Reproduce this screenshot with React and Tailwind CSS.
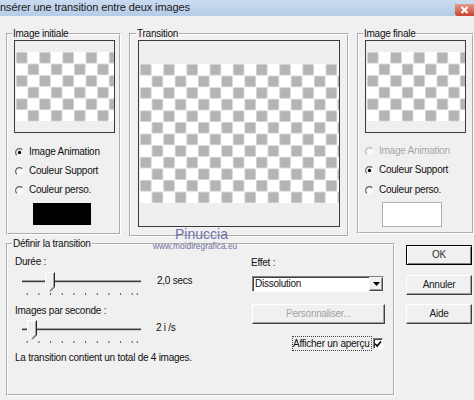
import React, { useId } from 'react';

function Checker({ w, h, cell = 11.6 }) {
  const id = 'p' + useId().replace(/[^a-zA-Z0-9]/g, '');
  return (
    <svg width={w} height={h} className="block ml-[1px]">
      <defs>
        <pattern id={id} width={cell * 2} height={cell * 2} patternUnits="userSpaceOnUse">
          <rect width={cell * 2} height={cell * 2} fill="#ffffff" />
          <rect x="0.4" y="0.4" width={cell - 0.8} height={cell - 0.8} fill="#b4b4b4" />
          <rect x={cell + 0.4} y={cell + 0.4} width={cell - 0.8} height={cell - 0.8} fill="#b4b4b4" />
        </pattern>
      </defs>
      <rect width={w} height={h} fill={`url(#${id})`} />
    </svg>
  );
}

function Radio({ checked, disabled }) {
  return (
    <svg width="9" height="9" viewBox="0 0 9 9" className="block shrink-0">
      <circle cx="4.5" cy="4.5" r="3.8" fill="#f9f9f9" />
      <path d="M7.2 1.8 A3.8 3.8 0 0 0 1.8 7.2" stroke={disabled ? '#b8b8b8' : '#666666'} strokeWidth="1.3" fill="none" />
      {checked && <circle cx="4.5" cy="4.5" r="1.7" fill="#000" />}
    </svg>
  );
}

function Slider({ thumb }) {
  const ticks = [0, 1, 2, 3, 4, 5, 6, 7, 8, 9].map((i) => 6.7 + i * 11.67).concat([116.7]);
  const t = thumb;
  return (
    <svg width="125" height="24" className="block ml-[5px] shrink-0">
      <rect x="2" y="9" width="119" height="1" fill="#a0a0a0" />
      <rect x="2" y="10" width="119" height="1.2" fill="#3a3a3a" />
      <rect x="2" y="11.2" width="119" height="1" fill="#d8d8d8" />
      <polygon points={`${t},1 ${t + 10},1 ${t + 10},16 ${t + 5},21 ${t},16`} fill="#f0f0f0" />
      <polyline points={`${t + 5},20.5 ${t + 0.5},16 ${t + 0.5},1.5 ${t + 9.5},1.5`} stroke="#ffffff" fill="none" />
      <polyline points={`${t + 8.5},2.5 ${t + 8.5},15.6 ${t + 5},19.2`} stroke="#a0a0a0" fill="none" />
      <polyline points={`${t + 9.5},1.5 ${t + 9.5},16 ${t + 5},20.5`} stroke="#2a2a2a" fill="none" />
      {ticks.map((x, i) => (
        <rect key={i} x={x} y="22" width="1" height="2" fill="#555555" />
      ))}
    </svg>
  );
}

function RadioRow({ label, checked, disabled, className, rml, tml }) {
  return (
    <div className={`flex items-center h-[12px] ${className}`}>
      <div className={rml}>
        <Radio checked={checked} disabled={disabled} />
      </div>
      <span className={`${tml} ${disabled ? 'text-[#a8a8a8]' : ''}`}>{label}</span>
    </div>
  );
}

export default function App() {
  return (
    <div className="w-[474px] h-[400px] bg-[#f0f0f0] relative overflow-hidden font-['Liberation_Sans',Arial,sans-serif] text-[10px] leading-[12px] tracking-[-0.25px] text-[#111]">
      {/* Title bar */}
      <div className="h-[16px] flex items-start justify-between bg-[linear-gradient(#c9dbf0,#b5cce8)]">
        <span className="text-[11px] leading-[14px] tracking-[-0.1px] text-[#1a1a1a]">nsérer une transition entre deux images</span>
        <div className="mt-[4px] w-[19px] h-[12px] rounded-bl-[3px] bg-[linear-gradient(#e49a8c,#c8432f)] flex items-center justify-center">
          <svg width="9" height="8" viewBox="0 0 9 8">
            <path d="M1.5 1 L7.5 7 M7.5 1 L1.5 7" stroke="#fff" strokeWidth="2" />
          </svg>
        </div>
      </div>

      {/* Top row */}
      <div className="flex items-start mt-[12px] h-[209px]">
        <fieldset className="ml-[6px] w-[115px] h-[207px] border-2 border-white [--tw-border-style:groove] [border-style:groove] min-w-0">
          <legend className="ml-[4px] px-[1px]">Image initiale</legend>
          <div className="ml-[6px] w-[101px] h-[93px] border border-[#3c3c3c] bg-[#efefef] pt-[11px]">
            <Checker w={98} h={70} />
          </div>
          <RadioRow className="mt-[13px]" rml="ml-[7px]" tml="ml-[5px]" label="Image Animation" checked />
          <RadioRow className="mt-[7px]" rml="ml-[7px]" tml="ml-[5px]" label="Couleur Support" />
          <RadioRow className="mt-[7px]" rml="ml-[7px]" tml="ml-[5px]" label="Couleur perso." />
          <div className="mt-[7px] ml-[25px] w-[58px] h-[22px] bg-black" />
        </fieldset>

        <fieldset className="ml-[8px] w-[220px] h-[209px] border-2 border-white [--tw-border-style:groove] [border-style:groove] min-w-0">
          <legend className="ml-[5px] px-[1px]">Transition</legend>
          <div className="ml-[7px] w-[202px] h-[187px] border border-[#3c3c3c] bg-[#efefef] pt-[23px]">
            <Checker w={199} h={139} />
          </div>
        </fieldset>

        <fieldset className="ml-[8px] w-[117px] h-[206px] border-2 border-white [--tw-border-style:groove] [border-style:groove] min-w-0">
          <legend className="ml-[4px] px-[1px]">Image finale</legend>
          <div className="ml-[6px] w-[101px] h-[93px] border border-[#3c3c3c] bg-[#efefef] pt-[11px]">
            <Checker w={98} h={70} />
          </div>
          <RadioRow className="mt-[12px]" rml="ml-[6px]" tml="ml-[5px]" label="Image Animation" disabled />
          <RadioRow className="mt-[7px]" rml="ml-[6px]" tml="ml-[5px]" label="Couleur Support" checked />
          <RadioRow className="mt-[8px]" rml="ml-[6px]" tml="ml-[5px]" label="Couleur perso." />
          <div className="mt-[6px] ml-[23px] w-[60px] h-[25px] bg-white border border-[#b0b0b0]" />
        </fieldset>
      </div>

      {/* Bottom row */}
      <div className="flex items-start mt-[1px]">
        <fieldset className="ml-[6px] w-[389px] h-[158px] border-2 border-white [--tw-border-style:groove] [border-style:groove] min-w-0">
          <legend className="ml-[4px] px-[1px]">Définir la transition</legend>
          <div className="flex items-start">
            <div className="ml-[7px] w-[236px] flex flex-col items-start">
              <div className="mt-[6px]">Durée :</div>
              <div className="mt-[3px] flex items-start -ml-[0px]">
                <Slider thumb={25} />
                <span className="ml-[12px] mt-[4px]">2,0 secs</span>
              </div>
              <div className="mt-[10px]">Images par seconde :</div>
              <div className="mt-[2px] flex items-start">
                <Slider thumb={7} />
                <span className="ml-[11px] mt-[3px]">2 i /s</span>
              </div>
              <div className="mt-[9px]">La transition contient un total de 4 images.</div>
            </div>
            <div className="flex flex-col items-start">
              <div className="mt-[7px]">Effet :</div>
              <div className="mt-[7px] ml-[1px] w-[132px] h-[16px] bg-white border border-t-[#808080] border-l-[#808080] border-r-white border-b-white shadow-[inset_1px_1px_0_#404040] flex items-center justify-between">
                <span className="pl-[2px]">Dissolution</span>
                <div className="w-[14px] h-[14px] bg-[#f0f0f0] border border-t-[#f4f4f4] border-l-[#f4f4f4] border-r-[#404040] border-b-[#404040] shadow-[inset_-1px_-1px_0_#a0a0a0] flex items-center justify-center">
                  <svg width="7" height="4" viewBox="0 0 7 4">
                    <path d="M0 0 L7 0 L3.5 4 Z" fill="#000" />
                  </svg>
                </div>
              </div>
              <div className="mt-[12px] ml-[1px] w-[133px] h-[20px] bg-[#f0f0f0] border border-t-white border-l-white border-r-[#404040] border-b-[#404040] shadow-[inset_-1px_-1px_0_#a0a0a0] flex items-center justify-center text-[#a3a3a3]">
                Personnaliser...
              </div>
              <div className="mt-[12px] flex items-start">
                <div className="ml-[41px] w-[80px] h-[15px] border border-dotted border-[#444] flex items-center">Afficher un aperçu</div>
                <div className="ml-[1px] mt-[2px] w-[10px] h-[11px] bg-white border border-t-[#808080] border-l-[#808080] border-r-white border-b-white shadow-[inset_1px_1px_0_#404040] flex items-center justify-center">
                  <svg width="8" height="8" viewBox="0 0 8 8">
                    <path d="M1 3.8 L3.2 6 L7 1.5" stroke="#000" strokeWidth="1.6" fill="none" />
                  </svg>
                </div>
              </div>
            </div>
          </div>
        </fieldset>

        <div className="ml-[11px] mt-[7px] flex flex-col">
          <button className="w-[66px] h-[20px] bg-[#f0f0f0] border border-black shadow-[inset_1px_1px_0_#fff,inset_-1px_-1px_0_#808080] flex items-center justify-center text-[#333]">OK</button>
          <button className="mt-[10px] w-[66px] h-[20px] bg-[#f0f0f0] border border-t-white border-l-white border-r-[#404040] border-b-[#404040] shadow-[inset_-1px_-1px_0_#a0a0a0] flex items-center justify-center text-[#222]">Annuler</button>
          <button className="mt-[9px] w-[66px] h-[20px] bg-[#f0f0f0] border border-t-white border-l-white border-r-[#404040] border-b-[#404040] shadow-[inset_-1px_-1px_0_#a0a0a0] flex items-center justify-center text-[#222]">Aide</button>
        </div>
      </div>

      {/* Watermark */}
      <div className="absolute left-[175px] top-[226px] text-[14px] leading-[16px] tracking-[0px] text-[#7070a8]">Pinuccia</div>
      <div className="absolute left-[153px] top-[241px] text-[8.4px] leading-[10px] tracking-[0px] text-[#7070a0]">www.moidiregrafica.eu</div>
    </div>
  );
}
